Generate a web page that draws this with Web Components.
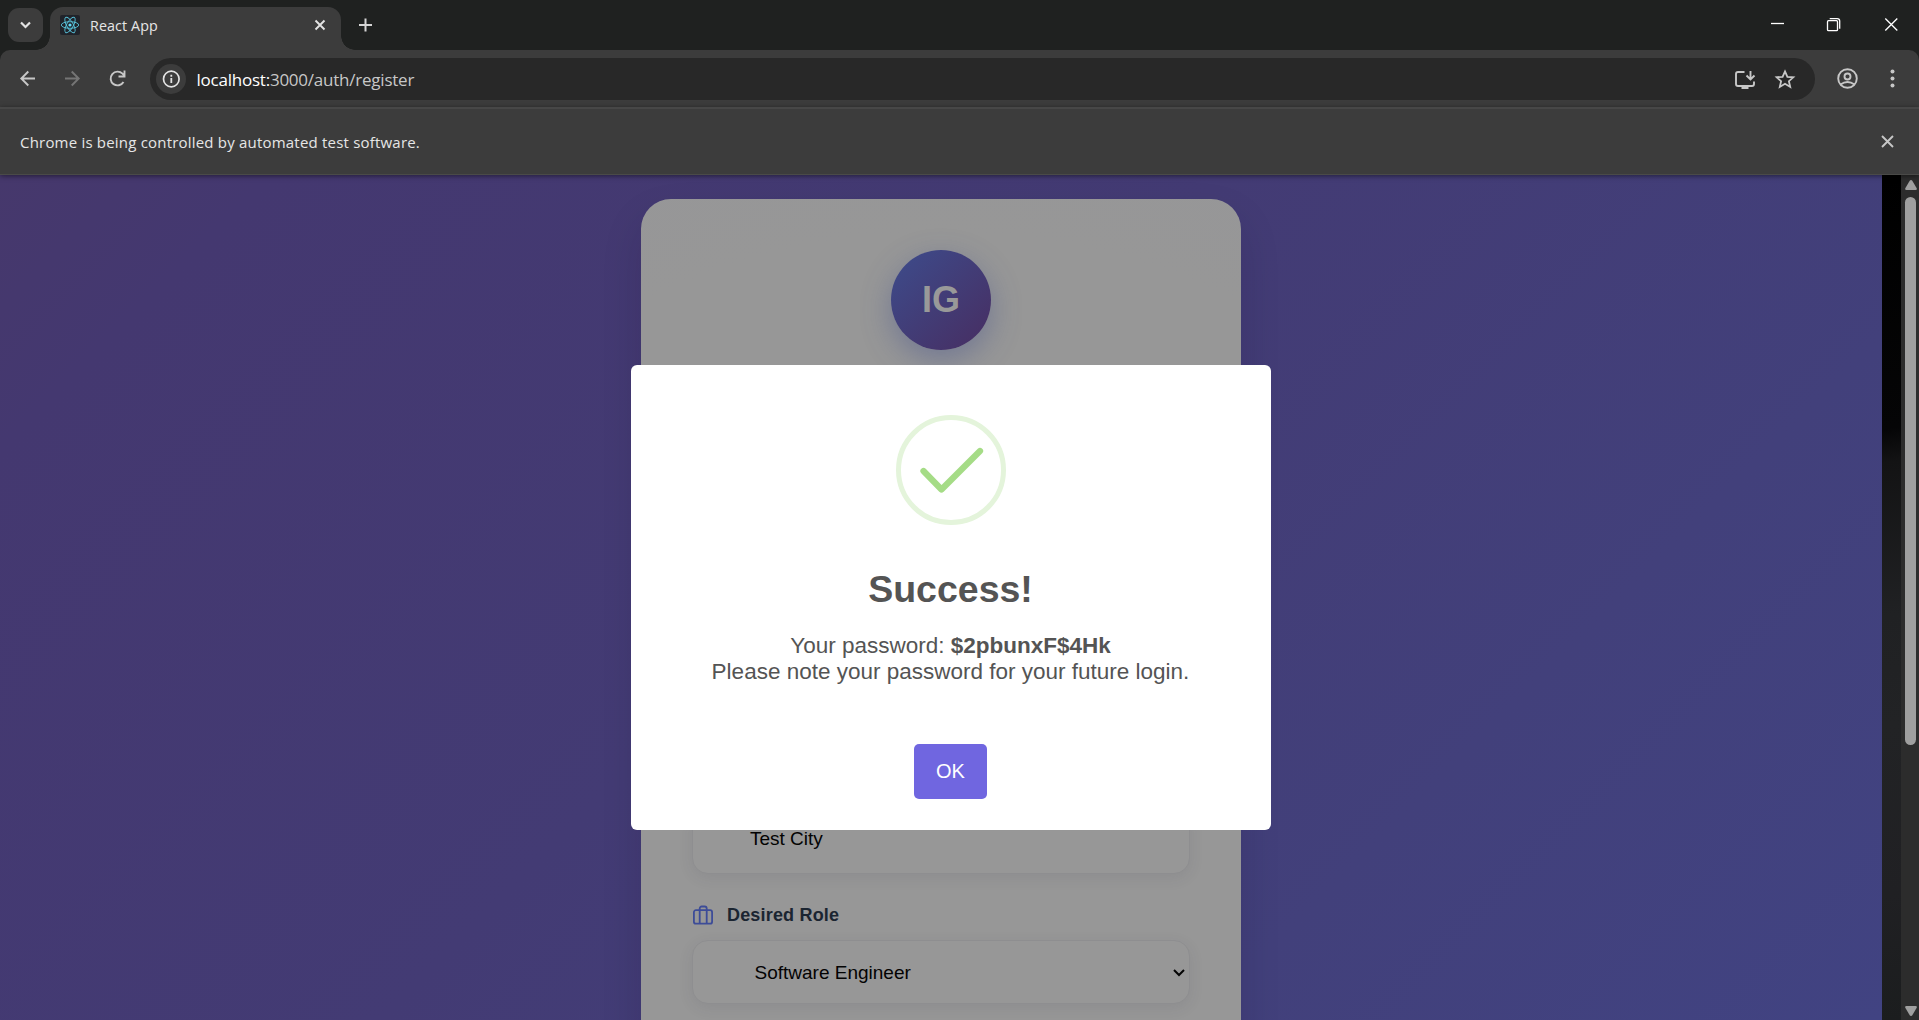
<!DOCTYPE html>
<html lang="en">
<head>
<meta charset="utf-8">
<title>React App</title>
<style>
html,body{margin:0;height:100%;overflow:hidden;background:#1f2120}
</style>
</head>
<body>
<browser-window>
  <tab-strip slot="tabs"><browser-tab>React App</browser-tab></tab-strip>
  <tool-bar slot="toolbar"><span slot="host">localhost:</span><span slot="path">3000/auth/register</span></tool-bar>
  <info-bar slot="info">Chrome is being controlled by automated test software.</info-bar>
  <register-page slot="page">
    <register-card slot="card">
      <form-field kind="text">Test City</form-field>
      <field-label>Desired Role</field-label>
      <form-field kind="select">Software Engineer</form-field>
    </register-card>
    <success-dialog slot="dialog">
      <span slot="title">Success!</span>
      <span slot="body">Your password: <b>$2pbunxF$4Hk</b><br>Please note your password for your future login.</span>
      <span slot="action">OK</span>
    </success-dialog>
  </register-page>
</browser-window>
<script>
const define = (name, html) => {
  const tpl = document.createElement('template');
  tpl.innerHTML = html;
  customElements.define(name, class extends HTMLElement {
    constructor() {
      super();
      this.attachShadow({ mode: 'open' }).append(tpl.content.cloneNode(true));
    }
  });
};

define('browser-window', `
<style>
:host{display:flex;flex-direction:column;width:100vw;height:100vh;overflow:hidden;font-family:"Open Sans","Noto Sans",sans-serif}
</style>
<slot name="tabs"></slot><slot name="toolbar"></slot><slot name="info"></slot><slot name="page"></slot>`);

define('tab-strip', `
<style>
:host{display:flex;height:50px;flex:none;background:#1f2120;align-items:stretch}
.search{width:35px;height:34px;margin:8px 7px 0 8px;border-radius:11px;background:#3c3c3c;display:grid;place-items:center}
.plus{margin:8px 0 0 11px}
.controls{margin-left:auto;display:flex}
svg{display:block}
</style>
<div class="search"><svg width="35" height="34" fill="none" stroke="#e3e3e3" stroke-width="2.2"><path d="M13 14.5l4.5 4.5 4.500-4.500"/></svg></div>
<slot></slot>
<svg class="plus" width="28" height="34" stroke="#d5d5d5" stroke-width="2"><path d="M7 17h13M13.500 10.500v13"/></svg>
<div class="controls">
<svg width="160" height="50" fill="none" stroke="#fff" stroke-width="1.300"><path d="M12 23.500h13"/><rect x="68.500" y="20.700" width="10" height="10" rx="1"/><path d="M70.700 18.600h7.500q2.500 0 2.500 2.500v7.700"/><path d="M126.300 18.500l12 12M138.300 18.500l-12 12"/></svg>
</div>`);

define('browser-tab', `
<style>
:host{display:flex;position:relative;width:291px;box-sizing:border-box;margin-top:7px;padding:0 9px 0 10px;background:#3c3c3c;border-radius:13px 13px 0 0;color:#e6e6e6;font-size:14.300px;letter-spacing:.1px}
:host::before,:host::after{content:"";position:absolute;bottom:0;width:14px;height:14px}
:host::before{left:-14px;background:radial-gradient(circle at 0 0,transparent 13.500px,#3c3c3c 14px)}
:host::after{right:-14px;background:radial-gradient(circle at 100% 0,transparent 13.500px,#3c3c3c 14px)}
.icon{width:20px;height:20px;margin:8px 10px 0 0}
.text{line-height:20px;margin-top:9px;white-space:nowrap}
.x{margin:8px 0 0 auto}
</style>
<svg class="icon" viewBox="0 0 20 20"><rect width="20" height="20" rx="2" fill="#20232a"/><g fill="none" stroke="#58c4dc" stroke-width=".9"><ellipse cx="10" cy="10" rx="8.700" ry="3.300"/><ellipse cx="10" cy="10" rx="8.700" ry="3.300" transform="rotate(60 10 10)"/><ellipse cx="10" cy="10" rx="8.700" ry="3.300" transform="rotate(120 10 10)"/></g><circle cx="10" cy="10" r="1.600" fill="#61dafb"/></svg>
<span class="text"><slot></slot></span>
<svg class="x" width="22" height="20" stroke="#e3e3e3" stroke-width="1.900"><path d="M5.500 5.500l9 9M14.500 5.500l-9 9"/></svg>`);

define('tool-bar', `
<style>
:host{display:block;flex:none;height:59px;background:#1f2120}
.bar{box-sizing:border-box;height:59px;background:#3c3c3c;border-radius:10px 10px 0 0;display:flex;align-items:flex-start}
svg{display:block;flex:none}
.nav{margin-top:13px}
.omni{margin-top:8px;width:1665px;height:42px;border-radius:21px;background:#282828;display:flex;align-items:center}
.info{margin-left:6px}
.url{margin:2px 0 0 10.500px;font-size:17px;line-height:24px;color:#c7c7c7;white-space:nowrap;letter-spacing:-.23px}
.url slot[name=host]{color:#fff}
.acts{margin-left:auto}
</style>
<div class="bar">
<svg class="nav" width="150" height="32" fill="none" stroke="#c7c7c7" stroke-width="1.900"><path d="M35 15.500H21.500M28.300 8.500l-7 7 7 7"/><path stroke="#757575" d="M65 15.500h13.500M71.700 8.500l7 7-7 7"/><path d="M123.500 19A6.900 6.900 0 1 1 122.500 10.700L124.500 13M124.500 7.500v6h-6"/></svg>
<div class="omni">
<svg class="info" width="30" height="30" fill="none" stroke="#e3e3e3"><circle cx="15" cy="15" r="15" fill="#3c3c3c" stroke="none"/><circle cx="15.300" cy="15" r="7.800" stroke-width="1.700"/><path stroke-width="1.800" d="M15.300 14v5M15.300 10.700v2"/></svg>
<div class="url"><slot name="host"></slot><slot name="path"></slot></div>
<svg class="acts" width="85" height="42" fill="none" stroke="#c7c7c7" stroke-width="1.900"><path d="M14.500 14H8a2 2 0 0 0-2 2v10a2 2 0 0 0 2 2h14a2 2 0 0 0 2-2v-2.500"/><path d="M11.500 29.500h7" stroke-width="3"/><path d="M20.500 13v8M16.500 17.500l4 4 4-4"/><path stroke-width="1.800" d="M55 13.400l2.400 5.400 5.900.5-4.400 3.900 1.300 5.700-5.200-3.100-5.200 3.100 1.300-5.700-4.400-3.900 5.900-.5z"/></svg>
</div>
<svg width="104" height="57" fill="none" stroke="#c7c7c7" stroke-width="1.900"><circle cx="32.500" cy="28.500" r="9.300"/><circle cx="32.500" cy="26.500" r="3"/><path d="M25.500 34.500q7-5 14 0"/><g fill="#c7c7c7" stroke="none"><circle cx="77.500" cy="21.500" r="2"/><circle cx="77.500" cy="28.500" r="2"/><circle cx="77.500" cy="35.500" r="2"/></g></svg>
</div>`);

define('info-bar', `
<style>
:host{display:flex;flex:none;box-sizing:border-box;height:68px;margin-top:-2px;background:#3c3c3c;border-top:2px solid #474747;border-bottom:1px solid #4a4a48;align-items:center;justify-content:space-between;padding:0 21px 0 20px;color:#e6e6e6;font-size:15px;letter-spacing:.2px;position:relative;z-index:2;box-shadow:0 1px 5px rgba(0,0,0,.5)}
</style>
<span><slot></slot></span>
<svg width="22" height="22" stroke="#c7c7c7" stroke-width="1.900"><path d="M6 5l11 11M17 5l-11 11"/></svg>`);

define('register-page', `
<style>
:host{display:flex;flex:1;min-height:0;position:relative;background:#000}
.page{width:1882px;flex:none;display:flex;justify-content:center;align-items:flex-start;overflow:hidden;background:linear-gradient(135deg,#46386c 0%,#443870 10%,#433b74 45%,#42407b 75%,#414382 100%)}
.strip{width:19px;background:linear-gradient(172deg,#000 0%,#050506 30%,#131314 34%,#202123 52%,#222325 65%,#202023 85%,#1b1d1e 100%)}
.scroll{width:18px;background:#2c2c2c;display:flex;flex-direction:column;align-items:center;box-sizing:border-box;padding:5px 0 4px 1px}
.thumb{width:11px;height:548px;border-radius:6px;background:#9f9f9f;margin-top:7px}
.scroll svg:last-child{margin-top:auto}
.overlay{position:absolute;left:631px;top:190px}
svg{display:block}
</style>
<div class="page"><slot name="card"></slot></div>
<div class="strip"></div>
<div class="scroll"><svg width="12" height="10" fill="#9f9f9f"><path d="M6 0q.8 0 1.300.8l4.400 7.500q.6 1.700-1 1.700H1.300q-1.600 0-1-1.700L4.700.8Q5.200 0 6 0z"/></svg><div class="thumb"></div><svg width="12" height="10" fill="#9f9f9f"><path d="M6 10q.8 0 1.300-.8l4.400-7.500Q12.300 0 10.700 0H1.300Q-.3 0 .3 1.700l4.400 7.500Q5.200 10 6 10z"/></svg></div>
<div class="overlay"><slot name="dialog"></slot></div>`);

define('register-card', `
<style>
:host{display:flex;flex-direction:column;box-sizing:border-box;width:600px;height:1100px;margin-top:24px;padding:51px 52px;border-radius:30px;background:radial-gradient(ellipse 760px 620px at 50% 500px,#979797 0,#979797 75%,#969698 100%);box-shadow:0 20px 40px rgba(20,10,50,.14);font-family:"Liberation Sans",Arial,sans-serif}
.logo{align-self:center;width:100px;height:100px;border-radius:50%;background:linear-gradient(135deg,#3d4c8c,#472d61);box-shadow:0 10px 30px rgba(61,76,140,.42);display:grid;place-items:center;color:#999;font-weight:700;font-size:36px;line-height:1}
.form{display:flex;flex-direction:column;margin:460px -1px 0}
</style>
<div class="logo">IG</div>
<div class="form"><slot></slot></div>`);

define('form-field', `
<style>
:host{display:flex;align-items:center;box-sizing:border-box;width:498px;height:64px;border:1px solid #8e8e90;border-radius:16px;background:#979797;box-shadow:0 4px 15px rgba(40,40,70,.09);padding:1px 4px 0 57px;font-size:19px;color:#030303}
:host([kind=text]){padding-bottom:8px}
:host([kind=select]){padding-left:61.500px}
svg{display:none;margin-left:auto}
:host([kind=select]) svg{display:block}
</style>
<span><slot></slot></span>
<svg width="12" height="10" fill="none" stroke="#050505" stroke-width="2"><path d="M1 2l5 5 5-5"/></svg>`);

define('field-label', `
<style>
:host{display:flex;align-items:center;height:20px;margin:31px 0 15px 1px;gap:14px;color:#1b2531;font-weight:700;font-size:18px;letter-spacing:.18px}
</style>
<svg width="20" height="20" fill="none" stroke="#3d4c98" stroke-width="1.800"><rect x=".9" y="5.200" width="18.200" height="13.500" rx="2"/><path d="M6.700 18.500V3.500a2 2 0 0 1 2-2h3a2 2 0 0 1 2 2v15"/></svg>
<span><slot></slot></span>`);

define('success-dialog', `
<style>
:host{display:flex;flex-direction:column;align-items:center;box-sizing:border-box;width:640px;height:465px;border-radius:6px;background:#fff;color:#545454;font-family:"Liberation Sans",Arial,sans-serif}
svg{display:block;margin-top:50px;flex:none}
.title{margin:43px 1px 0 0;font-size:37.500px;line-height:43px;font-weight:700}
.body{margin:22px 1px 0 0;font-size:22.500px;line-height:26px;text-align:center;white-space:nowrap}
.ok{margin:59px 1px 0 0;width:73px;height:55px;border-radius:5px;background:#7066e0;color:#fff;font-size:20px;display:grid;place-items:center}
</style>
<svg width="110" height="110" fill="none"><circle cx="55" cy="55" r="52.500" stroke="#e4f4db" stroke-width="5"/><path d="M27.500 56l18 18.500L84 36" stroke="#a5dc86" stroke-width="6.250" stroke-linecap="round" stroke-linejoin="round"/></svg>
<div class="title"><slot name="title"></slot></div>
<div class="body"><slot name="body"></slot></div>
<div class="ok"><slot name="action"></slot></div>`);
</script>
</body>
</html>
